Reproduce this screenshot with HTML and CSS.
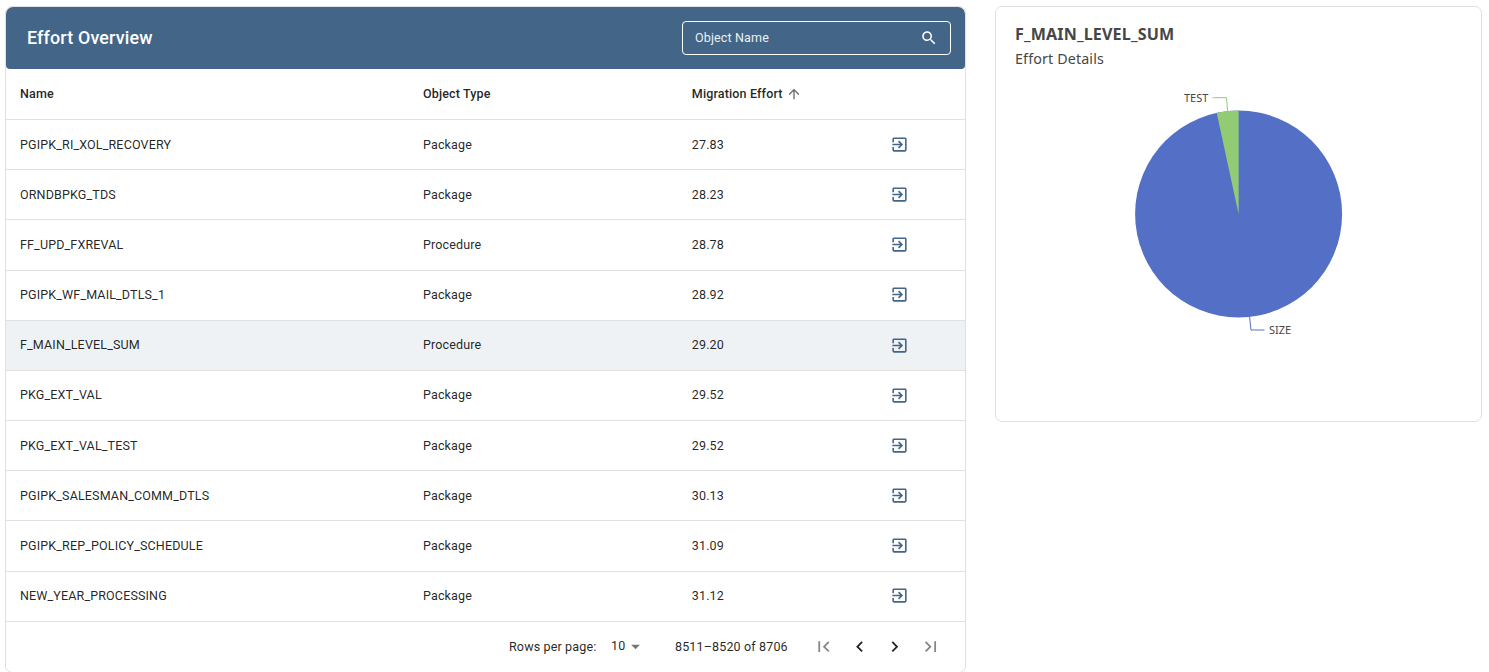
FILE: index.html
```html
<!DOCTYPE html>
<html lang="en">
<head>
<meta charset="utf-8">
<title>Effort Overview</title>
<link rel="stylesheet" href="styles.css">
</head>
<body>
<svg class="defs" width="0" height="0" aria-hidden="true">
  <symbol id="open" viewBox="0 0 24 24"><path d="M10.09 15.59 11.5 17l5-5-5-5-1.41 1.41L12.67 11H3v2h9.67l-2.58 2.59zM19 3H5c-1.11 0-2 .9-2 2v4h2V5h14v14H5v-4H3v4c0 1.1.89 2 2 2h14c1.1 0 2-.9 2-2V5c0-1.1-.9-2-2-2z"/></symbol>
</svg>
<main class="page">
  <section class="card overview">
    <header class="toolbar">
      <h1 class="title">Effort Overview</h1>
      <div class="search">
        <span class="search-text">Object Name</span>
        <svg class="search-icon" viewBox="0 0 24 24"><path d="M15.5 14h-.79l-.28-.27C15.41 12.59 16 11.11 16 9.5 16 5.91 13.09 3 9.5 3S3 5.91 3 9.5 5.91 16 9.5 16c1.61 0 3.09-.59 4.23-1.57l.27.28v.79l5 4.99L20.49 19l-4.99-5zm-6 0C7.01 14 5 11.99 5 9.5S7.01 5 9.5 5 14 7.01 14 9.5 11.99 14 9.5 14z"/></svg>
      </div>
    </header>
    <div class="row head"><span>Name</span><span>Object Type</span><span class="sorted">Migration Effort<svg class="sort-icon" viewBox="0 0 24 24"><path d="m4 12 1.41 1.41L11 7.83V20h2V7.83l5.58 5.59L20 12l-8-8-8 8z"/></svg></span></div>
    <div class="row"><span>PGIPK_RI_XOL_RECOVERY</span><span>Package</span><span>27.83</span><svg class="open"><use href="#open"/></svg></div>
    <div class="row"><span>ORNDBPKG_TDS</span><span>Package</span><span>28.23</span><svg class="open"><use href="#open"/></svg></div>
    <div class="row"><span>FF_UPD_FXREVAL</span><span>Procedure</span><span>28.78</span><svg class="open"><use href="#open"/></svg></div>
    <div class="row"><span>PGIPK_WF_MAIL_DTLS_1</span><span>Package</span><span>28.92</span><svg class="open"><use href="#open"/></svg></div>
    <div class="row selected"><span>F_MAIN_LEVEL_SUM</span><span>Procedure</span><span>29.20</span><svg class="open"><use href="#open"/></svg></div>
    <div class="row"><span>PKG_EXT_VAL</span><span>Package</span><span>29.52</span><svg class="open"><use href="#open"/></svg></div>
    <div class="row"><span>PKG_EXT_VAL_TEST</span><span>Package</span><span>29.52</span><svg class="open"><use href="#open"/></svg></div>
    <div class="row"><span>PGIPK_SALESMAN_COMM_DTLS</span><span>Package</span><span>30.13</span><svg class="open"><use href="#open"/></svg></div>
    <div class="row"><span>PGIPK_REP_POLICY_SCHEDULE</span><span>Package</span><span>31.09</span><svg class="open"><use href="#open"/></svg></div>
    <div class="row"><span>NEW_YEAR_PROCESSING</span><span>Package</span><span>31.12</span><svg class="open"><use href="#open"/></svg></div>
    <footer class="pager">
      <span class="pager-label">Rows per page:</span>
      <span class="pager-size">10</span>
      <svg class="caret" viewBox="0 0 24 24"><path d="m7 10 5 5 5-5z"/></svg>
      <span class="pager-range">8511–8520 of 8706</span>
      <div class="pager-nav">
        <svg class="nav-icon muted" viewBox="0 0 24 24"><path d="M18.41 16.59 13.82 12l4.59-4.59L17 6l-6 6 6 6zM6 6h2v12H6z"/></svg>
        <svg class="nav-icon" viewBox="0 0 24 24"><path d="M15.41 7.41 14 6l-6 6 6 6 1.41-1.41L10.83 12z"/></svg>
        <svg class="nav-icon" viewBox="0 0 24 24"><path d="M10 6 8.59 7.41 13.17 12l-4.58 4.59L10 18l6-6z"/></svg>
        <svg class="nav-icon muted" viewBox="0 0 24 24"><path d="M5.59 7.41 10.18 12l-4.59 4.59L7 18l6-6-6-6zM16 6h2v12h-2z"/></svg>
      </div>
    </footer>
  </section>
  <aside class="card details">
    <h2 class="details-title">F_MAIN_LEVEL_SUM</h2>
    <p class="details-sub">Effort Details</p>
    <svg class="chart" viewBox="0 0 448 280" width="448" height="280">
      <circle class="slice-size" cx="223.6" cy="139" r="103.5"/>
      <path class="slice-test" d="M223.6 139V35.5A103.5 103.5 0 0 0 201.7 37.8Z"/>
      <path class="line-test" d="M212.6 36 211.5 22.7H197.5"/>
      <path class="line-size" d="M234.6 242 236 255H249.5"/>
      <text class="chart-label" x="193.4" y="27" text-anchor="end">TEST</text>
      <text class="chart-label" x="254" y="259">SIZE</text>
    </svg>
  </aside>
</main>
</body>
</html>
```
FILE: styles.css
```css
* { box-sizing: border-box; }
body {
  margin: 0;
  background: #fff;
  color: rgba(0, 0, 0, 0.87);
  font: 12.53px/18px Roboto, sans-serif;
  letter-spacing: 0.142px;
  overflow: hidden;
}
.defs { display: block; height: 0; }
.page {
  display: flex;
  align-items: flex-start;
  gap: 29px;
  padding: 6px 7px 0 5px;
  height: 672px;
}
.card {
  border: 1px solid #e0e0e0;
  border-radius: 7px;
  background: #fff;
}
.overview { width: 961px; height: 667px; flex: none; }
.toolbar {
  display: flex;
  align-items: center;
  justify-content: space-between;
  height: 62px;
  padding: 0 14px 0 21px;
  background: #426588;
  border-radius: 7px 7px 4px 4px;
  color: #fff;
}
.title { margin: 0; font-size: 17.9px; line-height: 28px; font-weight: 500; letter-spacing: 0.15px; }
.search {
  display: flex;
  align-items: center;
  justify-content: space-between;
  width: 269px;
  height: 34px;
  padding: 0 12px;
  border: 1px solid #fff;
  border-radius: 4px;
}
.search-text { opacity: 0.9; }
.search-icon { width: 18px; height: 18px; fill: #fff; }
.row {
  display: grid;
  grid-template-columns: 403px 268.8px 198.2px 1fr;
  align-items: center;
  height: 50.17px;
  padding-left: 14px;
  border-bottom: 1px solid #e0e0e0;
}
.head { height: 51.1px; font-weight: 500; }
.selected { background: #eef2f5; }
.sorted { display: flex; align-items: center; gap: 3px; }
.sort-icon { width: 16px; height: 16px; fill: #6b6b6b; }
.open { width: 19px; height: 19px; margin-bottom: 0.4px; fill: #426588; }
.pager { display: flex; align-items: center; height: 50px; padding-left: 503px; }
.pager-label { width: 102px; }
.pager-size { padding-bottom: 2px; width: 14px; }
.caret { width: 21px; height: 21px; fill: #757575; }
.pager-range { width: 167px; padding-left: 29px; }
.pager-nav { display: flex; gap: 14.3px; }
.nav-icon { width: 21.4px; height: 21.4px; fill: #212121; }
.muted { fill: #858585; }
.details {
  width: 487px;
  height: 416px;
  padding: 15px 19px;
  color: #464646;
  font-family: "Noto Sans", sans-serif;
  letter-spacing: 0;
}
.details-title { margin: 0; font-size: 16.1px; line-height: 24px; font-weight: 700; letter-spacing: 0.142px; }
.details-sub { margin: 0; font-size: 14.3px; line-height: 26px; letter-spacing: 0.134px; }
.chart { display: block; margin-top: 3px; }
.slice-size { fill: #5470c6; }
.slice-test { fill: #91cc75; }
.line-test, .line-size { fill: none; stroke: #91cc75; stroke-width: 1; }
.line-size { stroke: #5470c6; }
.chart-label { font: 11px "Noto Sans", sans-serif; fill: #464646; }
```
